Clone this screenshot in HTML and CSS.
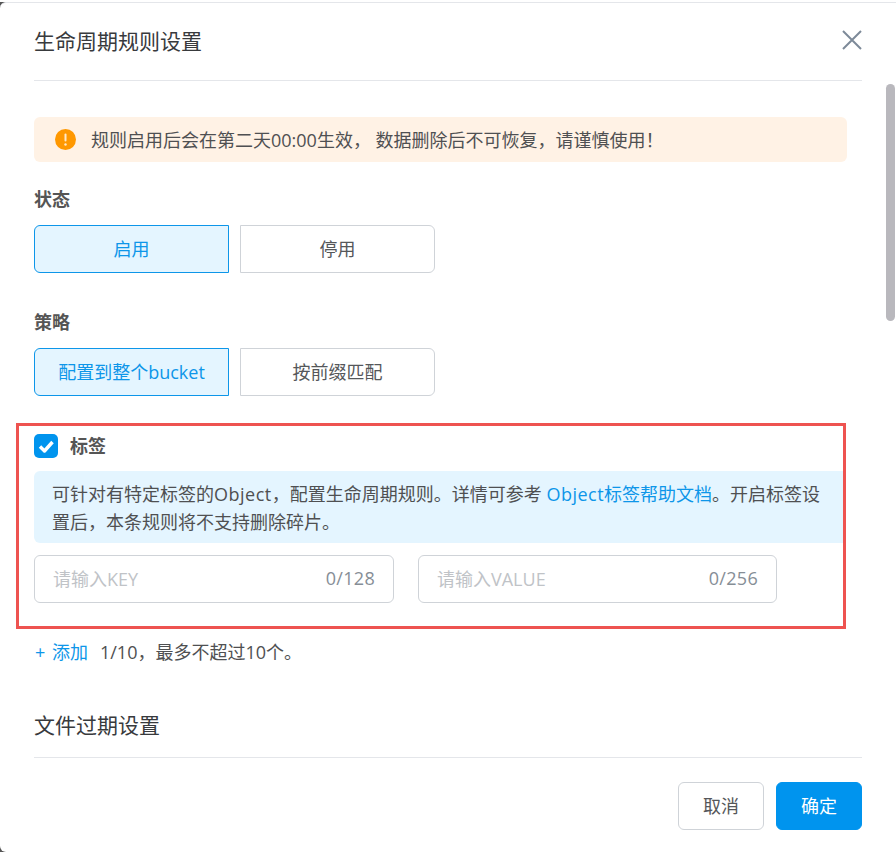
FILE: index.html
```html
<!DOCTYPE html>
<html lang="zh-CN">
<head>
    <meta charset="UTF-8">
    <meta name="viewport" content="width=device-width, initial-scale=1.0">
    <title>生命周期规则设置</title>
    <link rel="stylesheet" href="styles.css">
</head>
<body>
    <div class="backdrop">
        <div class="dialog">
            <div class="dialog-header">
                <h2>生命周期规则设置</h2>
                <svg class="close" viewBox="0 0 20 20">
                    <path d="M1 1 L19 19 M19 1 L1 19"/>
                </svg>
            </div>

            <div class="dialog-body">
                <div class="alert">
                    <svg class="alert-icon" viewBox="0 0 21 21">
                        <circle cx="10.5" cy="10.5" r="10.5" class="alert-bg"/>
                        <rect x="9.5" y="4.5" width="2" height="8" rx="1" class="alert-mark"/>
                        <circle cx="10.5" cy="15.5" r="1.2" class="alert-mark"/>
                    </svg>
                    <span>规则启用后会在第二天00:00生效， 数据删除后不可恢复，请谨慎使用！</span>
                </div>

                <div class="field-label">状态</div>
                <div class="choices">
                    <button class="choice active">启用</button>
                    <button class="choice">停用</button>
                </div>

                <div class="field-label second">策略</div>
                <div class="choices">
                    <button class="choice active">配置到整个bucket</button>
                    <button class="choice">按前缀匹配</button>
                </div>

                <div class="tag-check">
                    <svg class="checkbox" viewBox="0 0 24 24">
                        <rect width="24" height="24" rx="5" class="checkbox-bg"/>
                        <path d="M6 12.5 L10.5 17 L18.5 8" class="checkbox-tick"/>
                    </svg>
                    <span>标签</span>
                </div>
                <div class="tag-note">
                    <span>可针对有特定标签的<span class="latin">Object</span>，配置生命周期规则。详情可参考 </span><a href="#"><span class="latin">Object</span>标签帮助文档</a><span>。开启标签设</span><br>
                    <span>置后，本条规则将不支持删除碎片。</span>
                </div>
                <div class="tag-inputs">
                    <div class="tag-input">
                        <span class="placeholder">请输入KEY</span>
                        <span class="counter">0/128</span>
                    </div>
                    <div class="tag-input">
                        <span class="placeholder">请输入VALUE</span>
                        <span class="counter">0/256</span>
                    </div>
                </div>
                <div class="add-row">
                    <a href="#">+ 添加</a>
                    <span>1/10，最多不超过10个。</span>
                </div>

                <div class="section-title">文件过期设置</div>
                <div class="section-line"></div>
            </div>

            <div class="dialog-footer">
                <button class="btn">取消</button>
                <button class="btn primary">确定</button>
            </div>

            <!-- Annotation box drawn over the tag section -->
            <div class="highlight"></div>
            <div class="scrollbar"></div>
        </div>
    </div>
</body>
</html>
```

FILE: styles.css
```css
* {
    box-sizing: border-box;
}
html, body {
    margin: 0;
    height: 100%;
    background: white;
}
body {
    font-family: "Open Sans", "Noto Sans CJK SC", sans-serif;
    color: #4f5052;
    font-size: 18px;
    overflow: hidden;
}
.backdrop {
    margin-top: 2px;
    background: #555;
}
.dialog {
    position: relative;
    height: 850px;
    background: white;
    border-top: 1px solid #e4e6ea;
    border-radius: 6px 0 0 6px;
    padding: 0 34px;
    display: flex;
    flex-direction: column;
}

/* Header */
.dialog-header {
    height: 78px;
    border-bottom: 1px solid #e4e6ea;
    display: flex;
    justify-content: space-between;
    align-items: center;
    flex: none;
}
.dialog-header h2 {
    margin: 0 0 2px;
    font-size: 21px;
    font-weight: normal;
    line-height: 28px;
    color: #383a3d;
}
.close {
    width: 20px;
    height: 20px;
    margin-bottom: 4px;
}
.close path {
    stroke: #7d8a99;
    stroke-width: 2;
    fill: none;
}

/* Body */
.dialog-body {
    flex: 1;
    padding-top: 36px;
}
.alert {
    width: 813px;
    height: 45px;
    background: #fff2e5;
    border-radius: 6px;
    padding: 0 0 2px 21px;
    display: flex;
    align-items: center;
    gap: 15px;
}
.alert-icon {
    width: 21px;
    height: 21px;
    flex: none;
    margin-top: 2px;
}
.alert-bg {
    fill: #ff9800;
}
.alert-mark {
    fill: #ffe9c9;
}
.field-label {
    margin-top: 25px;
    height: 26px;
    line-height: 24px;
    font-size: 18px;
    font-weight: bold;
    color: #555;
}
.field-label.second {
    margin-top: 37px;
}
.choices {
    display: flex;
    gap: 11px;
    margin-top: 12px;
}
.choice {
    width: 195px;
    height: 48px;
    border: 1px solid #cfd3d8;
    border-radius: 0 6px 6px 0;
    background: white;
    color: #55575a;
    font: inherit;
    padding: 0 0 2px;
}
.choice.active {
    background: #e4f5ff;
    border-color: #0d96e9;
    border-radius: 6px 0 0 6px;
    color: #0d96e9;
}

/* Tag section */
.tag-check {
    display: flex;
    align-items: center;
    gap: 12px;
    margin-top: 38px;
    height: 24px;
    font-size: 18px;
    font-weight: bold;
    color: #555;
}
.tag-check span {
    margin-bottom: 2px;
}
.checkbox {
    width: 24px;
    height: 24px;
}
.checkbox-bg {
    fill: #0094ee;
}
.checkbox-tick {
    fill: none;
    stroke: white;
    stroke-width: 3.4;
    stroke-linejoin: round;
}
.tag-note {
    margin-top: 13px;
    width: 811px;
    height: 72px;
    background: #e4f5ff;
    border-radius: 6px 0 0 6px;
    padding: 9px 18px;
    line-height: 28px;
}
.latin {
    letter-spacing: 0.5px;
}
.tag-note a, .add-row a {
    color: #0d96e9;
    text-decoration: none;
}
.tag-inputs {
    display: flex;
    gap: 24px;
    margin-top: 12px;
}
.tag-input {
    width: 360px;
    height: 48px;
    border: 1px solid #cfd3d8;
    border-radius: 6px;
    padding: 0 18px 2px;
    display: flex;
    justify-content: space-between;
    align-items: center;
}
.tag-input + .tag-input {
    width: 359px;
}
.placeholder {
    color: #c0c3c7;
}
.counter {
    color: #868e96;
    letter-spacing: 0.3px;
}
.add-row {
    display: flex;
    gap: 12px;
    margin-top: 36px;
    height: 26px;
    line-height: 26px;
    padding-left: 1px;
}
.add-row a {
    word-spacing: 2px;
}
.section-title {
    margin-top: 46px;
    font-size: 21px;
    line-height: 28px;
    color: #383a3d;
}
.section-line {
    margin-top: 18px;
    height: 1px;
    background: #e4e6ea;
}

/* Footer */
.dialog-footer {
    flex: none;
    display: flex;
    justify-content: flex-end;
    gap: 12px;
    padding-bottom: 22px;
}
.btn {
    width: 86px;
    height: 48px;
    border: 1px solid #cfd3d8;
    border-radius: 6px;
    background: white;
    color: #55575a;
    font: inherit;
    padding: 0 0 2px;
}
.btn.primary {
    background: #0094ee;
    border-color: #0094ee;
    color: white;
}

/* Overlays */
.highlight {
    position: absolute;
    left: 16px;
    top: 420px;
    width: 830px;
    height: 206px;
    border: 3px solid #ee5350;
}
.scrollbar {
    position: absolute;
    left: 886px;
    top: 81px;
    width: 9px;
    height: 237px;
    border-radius: 5px;
    background: #b9b8bd;
}
```
